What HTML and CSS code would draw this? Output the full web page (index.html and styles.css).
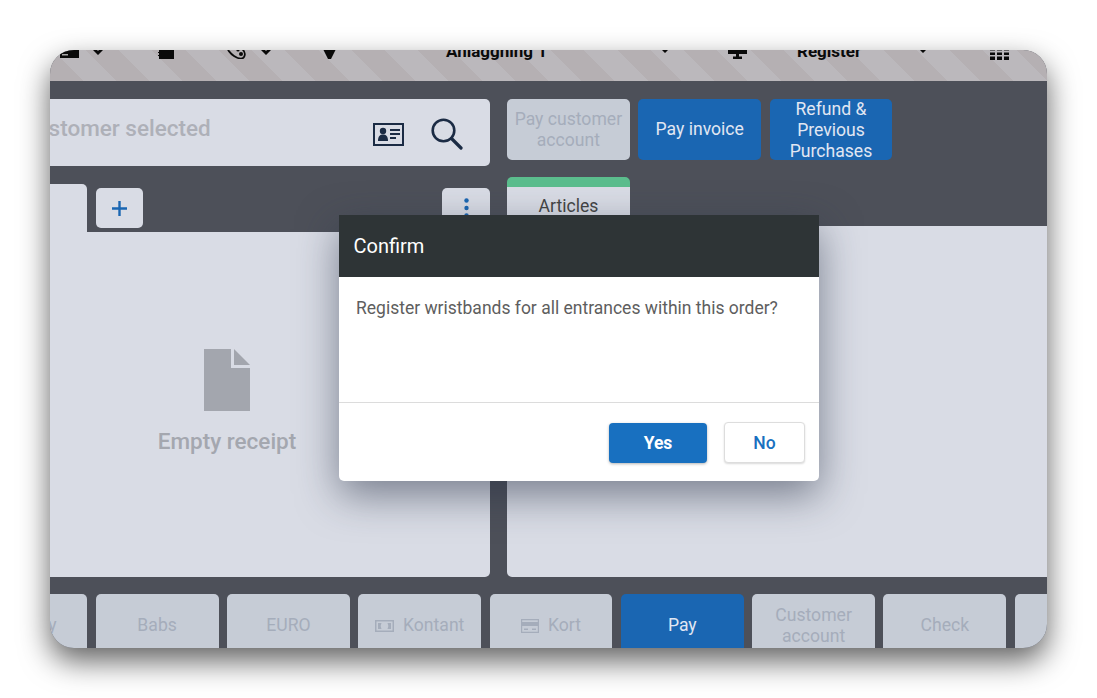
FILE: index.html
```html
<!DOCTYPE html>
<html lang="en">
<head>
<meta charset="utf-8">
<title>Confirm</title>
<link rel="stylesheet" href="styles.css">
</head>
<body>
<div class="window">
  <header class="topbar">
    <div class="topbar-row">
      <svg class="tb-icon" width="19" height="16" viewBox="0 0 19 16"><path d="M0 1h19v14H0z" fill="#0a0a0a"/><path d="M2 11h6v1.500H2z" fill="#aaa"/></svg>
      <svg class="tb-chev" width="12" height="13" viewBox="0 0 12 13"><path d="M0 7l2-2 4 4 4-4 2 2-6 6z" fill="#0a0a0a"/></svg>
      <svg class="tb-icon" width="16" height="18" viewBox="0 0 16 18"><path d="M1 0h15v18H1z" fill="#0a0a0a"/><path d="M0 2h2v1H0zM0 5h2v1H0zM0 8h2v1H0zM0 11h2v1H0zM0 14h2v1H0z" fill="#0a0a0a"/></svg>
      <svg class="tb-icon" width="19" height="16" viewBox="0 0 19 16"><path d="M1 3c3-3 8-2 12 1s6 7 4 10-7 1-10-1-8-7-6-10z" fill="none" stroke="#0a0a0a" stroke-width="1.800"/><circle cx="6" cy="5" r="1.600" fill="#0a0a0a"/><circle cx="11" cy="7" r="1.600" fill="#0a0a0a"/><circle cx="14" cy="11" r="2" fill="#0a0a0a"/></svg>
      <svg class="tb-chev" width="12" height="13" viewBox="0 0 12 13"><path d="M0 7l2-2 4 4 4-4 2 2-6 6z" fill="#0a0a0a"/></svg>
      <svg class="tb-icon" width="13" height="14" viewBox="0 0 13 14"><path d="M0 0h13v4L8 14H5L0 4z" fill="#0a0a0a"/></svg>
      <span class="tb-text">Anläggning 1</span>
      <svg class="tb-chev tb-chev-sm" width="12" height="13" viewBox="0 0 12 13"><path d="M0 7l2-2 4 4 4-4 2 2-6 6z" fill="#0a0a0a"/></svg>
      <svg class="tb-icon" width="19" height="14" viewBox="0 0 19 14"><path d="M0 0h19v9H0zM8 9h3v3H8zM5 11.500h9V14H5z" fill="#0a0a0a"/></svg>
      <span class="tb-text">Register</span>
      <svg class="tb-chev tb-chev-sm" width="12" height="13" viewBox="0 0 12 13"><path d="M0 7l2-2 4 4 4-4 2 2-6 6z" fill="#0a0a0a"/></svg>
      <svg class="tb-icon tb-grid" width="19" height="12" viewBox="0 0 19 12"><path d="M0 0h5v2.500H0zM7 0h5v2.500H7zM14 0h5v2.500h-5zM0 4.500h5V7H0zM7 4.500h5V7H7zM14 4.500h5V7h-5zM0 8.500h5V12H0zM7 8.500h5V12H7zM14 8.500h5V12h-5z" fill="#0a0a0a"/></svg>
    </div>
  </header>

  <main class="content">
    <section class="col-left">
      <div class="customer">
        <span class="customer-text">No customer selected</span>
        <svg class="id-icon" width="31" height="23" viewBox="0 0 31 23"><path d="M1 1h29v21H1z" fill="none" stroke="#1b2b44" stroke-width="2"/><circle cx="10" cy="8" r="3.200" fill="#1b2b44"/><path d="M5 18c0-5 2-6.500 5-6.500s5 1.500 5 6.500z" fill="#1b2b44"/><path d="M17 6h10v2H17zM17 10h10v2H17zM17 14h6v2h-6z" fill="#1b2b44"/></svg>
        <svg class="search-icon" width="32" height="32" viewBox="0 0 32 32"><circle cx="12.500" cy="12.500" r="10.800" fill="none" stroke="#1b2b44" stroke-width="2.600"/><path d="M20.500 20.500l9.500 9.500" stroke="#1b2b44" stroke-width="3.200" stroke-linecap="round"/></svg>
      </div>
      <div class="tabs">
        <div class="tab"></div>
        <button class="tab-btn tab-add"><svg width="15" height="15" viewBox="0 0 15 15"><path d="M7.500 0v15M0 7.500h15" stroke="#1a66b2" stroke-width="2.400"/></svg></button>
        <button class="tab-btn tab-menu"><svg width="5" height="20" viewBox="0 0 5 20"><circle cx="2.500" cy="2.500" r="2.200" fill="#1a66b2"/><circle cx="2.500" cy="10" r="2.200" fill="#1a66b2"/><circle cx="2.500" cy="17.500" r="2.200" fill="#1a66b2"/></svg></button>
      </div>
      <div class="panel panel-left">
        <svg class="file-icon" width="46" height="62" viewBox="0 0 46 62"><path d="M0 0h27v19h19v43H0z" fill="#a3a6ae"/><path d="M30 0l16 16H30z" fill="#a3a6ae"/></svg>
        <div class="empty-text">Empty receipt</div>
      </div>
    </section>
    <section class="col-right">
      <div class="actions">
        <button class="btn btn-off">Pay customer account</button>
        <button class="btn btn-on">Pay invoice</button>
        <button class="btn btn-on">Refund &amp; Previous Purchases</button>
      </div>
      <div class="art-tab">Articles</div>
      <div class="panel panel-right"></div>
    </section>
  </main>

  <footer class="paybar">
    <button class="btn btn-off">Delivery</button>
    <button class="btn btn-off">Babs</button>
    <button class="btn btn-off">EURO</button>
    <button class="btn btn-off btn-icon"><svg width="19" height="12" viewBox="0 0 19 12"><path fill-rule="evenodd" d="M0 0h19v12H0zM1.500 1.500v9h16v-9z" fill="#a5adbb"/><path d="M3 3h3.500a6 6 0 0 0 0 6H3zM16 3h-3.500a6 6 0 0 1 0 6H16z" fill="#a5adbb"/></svg>Kontant</button>
    <button class="btn btn-off btn-icon"><svg width="18" height="14" viewBox="0 0 18 14"><path fill-rule="evenodd" d="M0 0h18v14H0zM1.200 7v5.800h15.600V7zM1.200 1.200V3h15.600V1.200z" fill="#a5adbb"/><path d="M3 9.500h4V11H3zM11 9.500h4V11h-4z" fill="#a5adbb"/></svg>Kort</button>
    <button class="btn btn-on">Pay</button>
    <button class="btn btn-off">Customer account</button>
    <button class="btn btn-off">Check</button>
    <button class="btn btn-off"></button>
  </footer>

  <div class="dialog">
    <div class="dialog-head">Confirm</div>
    <div class="dialog-body">Register wristbands for all entrances within this order?</div>
    <div class="dialog-foot">
      <button class="dbtn dbtn-yes">Yes</button>
      <button class="dbtn dbtn-no">No</button>
    </div>
  </div>
</div>
</body>
</html>
```

FILE: styles.css
```css
* { box-sizing: border-box; }
html, body { height: 100%; }
body {
  margin: 0;
  padding: 50px;
  background: #fff;
  font-family: Roboto, "Liberation Sans", sans-serif;
  overflow: hidden;
}
button { font: inherit; border: 0; padding: 0; }

.window {
  position: relative;
  width: 997px;
  height: 598px;
  border-radius: 24px;
  overflow: hidden;
  background: #4d5059;
  display: flex;
  flex-direction: column;
  box-shadow: 0 13px 30px rgba(0, 0, 0, .62);
}

.topbar {
  flex: 0 0 31px;
  overflow: hidden;
  background: repeating-linear-gradient(45deg, #b5b0b3 0 23.500px, #bbb8bc 23.500px 47px);
}
.topbar-row {
  display: grid;
  grid-template-columns: 32px 66px 69px 33px 63px 123px 213px 69px 69px 120px 73px 1fr;
  align-items: end;
  justify-items: start;
  height: 30px;
  margin-top: -20px;
  padding-left: 10px;
}
.tb-icon { display: block; margin-bottom: 1px; }
.tb-grid { margin-bottom: 0; }
.tb-chev { display: block; margin-bottom: 5px; }
.tb-chev-sm { margin-bottom: 7px; }
.tb-text {
  font-size: 17px;
  font-weight: 700;
  line-height: 20px;
  color: #0a0a0a;
  white-space: nowrap;
  margin-bottom: -1px;
}

.content {
  flex: 0 0 478px;
  display: flex;
  gap: 17px;
  margin-top: 18px;
}
.col-left { flex: 0 0 440px; display: flex; flex-direction: column; }
.col-right { flex: 1; display: flex; flex-direction: column; }

.customer {
  height: 67px;
  background: #d9dce5;
  border-radius: 0 5px 5px 0;
  display: flex;
  align-items: center;
}
.customer-text {
  flex: 1;
  margin-left: -60px;
  margin-top: -10px;
  font-size: 22.500px;
  font-weight: 500;
  color: #aeb0b8;
  white-space: nowrap;
}
.id-icon { margin-top: 3px; margin-right: 27px; }
.search-icon { margin-top: 3px; margin-right: 27px; }

.tabs {
  height: 48px;
  margin-top: 18px;
  display: flex;
  align-items: flex-start;
}
.tab {
  width: 37px;
  height: 48px;
  background: #d9dce5;
  border-radius: 0 5px 0 0;
}
.tab-btn {
  width: 47px;
  height: 40px;
  margin-top: 4px;
  background: #d9dce5;
  border-radius: 5px;
  display: flex;
  align-items: center;
  justify-content: center;
}
.tab-add { margin-left: 9px; }
.tab-menu { margin-left: auto; width: 48px; }

.panel { background: #d9dce5; flex: 1; }
.panel-left {
  border-radius: 0 0 5px 0;
  display: flex;
  flex-direction: column;
  align-items: center;
  padding-top: 117px;
  padding-right: 86px;
}
.panel-right { border-radius: 0 0 0 5px; }
.file-icon { display: block; }
.empty-text {
  margin-top: 15px;
  font-size: 22.500px;
  line-height: 30px;
  font-weight: 500;
  color: #a4a7af;
}

.actions { display: flex; gap: 8.500px; }
.btn {
  flex: 0 0 122.800px;
  width: 122.800px;
  height: 61px;
  border-radius: 5px;
  font-size: 17.600px;
  line-height: 21px;
  text-align: center;
}
.btn-off { background: #c6ccd6; color: #a5adbb; }
.btn-on { background: #1a66b2; color: #e1e7f2; }
.btn-icon { display: flex; align-items: center; justify-content: center; gap: 9px; }

.art-tab {
  width: 123px;
  height: 49px;
  margin-top: 17px;
  border-top: 10px solid #5bbd8d;
  border-radius: 5px 5px 0 0;
  background: #d9dce5;
  color: #444;
  font-size: 17.600px;
  line-height: 39px;
  text-align: center;
}

.paybar {
  display: flex;
  gap: 8.500px;
  margin-top: 17px;
  margin-left: -85.600px;
  height: 63px;
}
.paybar .btn { height: 63px; }

.dialog {
  position: absolute;
  left: 289px;
  top: 165px;
  width: 480px;
  height: 266px;
  background: #fff;
  border-radius: 0 0 5px 5px;
  box-shadow: 0 14px 40px rgba(40, 50, 70, .55);
  display: flex;
  flex-direction: column;
}
.dialog-head {
  height: 62px;
  padding-left: 14.500px;
  background: #2e3436;
  color: #fff;
  font-size: 20px;
  line-height: 62px;
}
.dialog-body {
  height: 126px;
  padding: 20px 17px 0;
  border-bottom: 1px solid #dcdcdc;
  font-size: 17.500px;
  line-height: 22px;
  color: #5e5e5e;
}
.dialog-foot {
  flex: 1;
  display: flex;
  justify-content: flex-end;
  align-items: center;
  gap: 17px;
  padding: 1px 14px 0 0;
}
.dbtn {
  height: 40px;
  border-radius: 4px;
  font-size: 17.500px;
  font-weight: 700;
}
.dbtn-yes {
  width: 98px;
  background: #1870c0;
  color: #fff;
  box-shadow: 0 1px 3px rgba(0, 0, 0, .3);
}
.dbtn-no {
  width: 81px;
  height: 41px;
  font-weight: 500;
  background: #fff;
  color: #1870c0;
  border: 1px solid #ddd;
  box-shadow: 0 1px 2px rgba(0, 0, 0, .15);
}
```
